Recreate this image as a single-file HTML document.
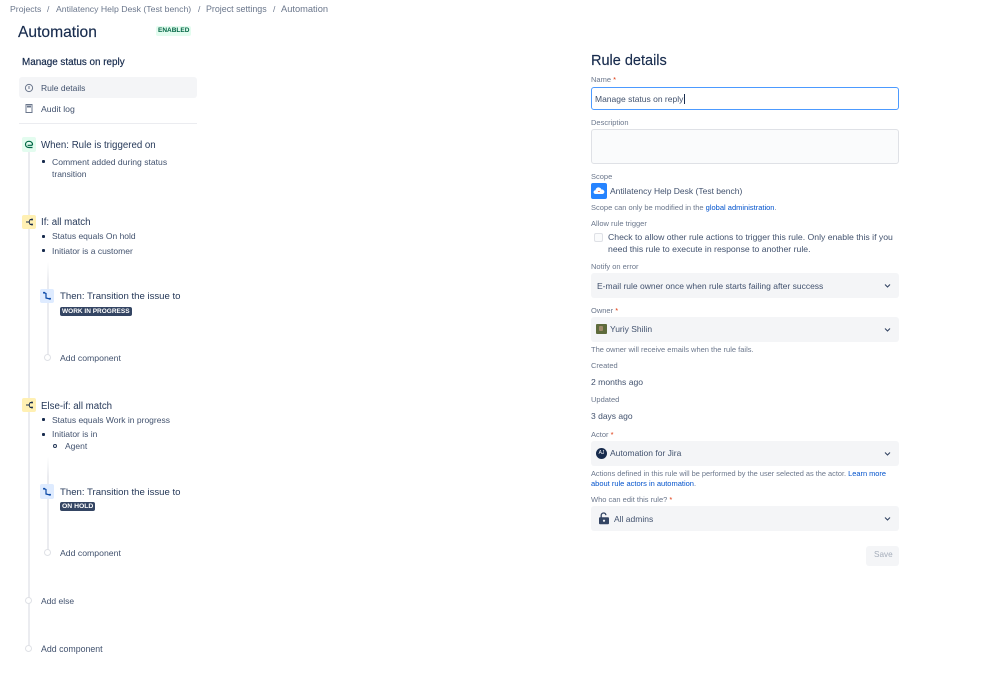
<!DOCTYPE html>
<html><head><meta charset="utf-8"><title>Automation</title>
<style>
html,body{margin:0;padding:0;background:#fff;width:999px;height:682px;overflow:hidden}
body{position:relative;font-family:"Liberation Sans",sans-serif;color:#42526e;font-size:8.5px}
.t{position:absolute;white-space:nowrap;line-height:12px;height:12px}
.b{position:absolute}
.l{color:#6b778c;font-size:7.5px}
.r{color:#de350b}
.c{color:#172b4d}
.h{font-size:9.7px;color:#253858}
.dot{position:absolute;width:3px;height:3px;border-radius:1px;background:#172b4d}
.sel{position:absolute;left:591px;width:308px;height:25px;background:#f4f5f7;border-radius:3px}
.bd{position:absolute;background:#ebecf0;width:2px}
.circ{position:absolute;width:5px;height:5px;border:1px solid #dfe1e6;border-radius:50%;background:#fff}
svg{position:absolute;display:block}
.tag{position:absolute;background:#344563;color:#fff;font-weight:bold;font-size:6.5px;line-height:9px;height:9px;border-radius:2px;padding:0 2px;white-space:nowrap}
a{color:#0052cc;text-decoration:none}
</style></head><body>

<div class="t" style="left:10px;top:3px;color:#6b778c;font-size:8.7px">Projects</div>
<div class="t" style="left:47px;top:3px;color:#6b778c">/</div>
<div class="t" style="left:56px;top:3px;color:#6b778c;font-size:8.7px">Antilatency Help Desk (Test bench)</div>
<div class="t" style="left:198px;top:3px;color:#6b778c">/</div>
<div class="t" style="left:206px;top:3px;color:#6b778c;font-size:8.9px">Project settings</div>
<div class="t" style="left:273px;top:3px;color:#6b778c">/</div>
<div class="t" style="left:281px;top:3px;color:#6b778c;font-size:9.3px">Automation</div>

<div class="t c" style="left:18px;top:23.5px;font-size:15.6px;line-height:18px;height:18px;-webkit-text-stroke:.15px #172b4d">Automation</div>
<div class="b" style="left:156px;top:26px;width:35px;height:10px;background:#e3fcef;border-radius:2px"></div>
<div class="t" style="left:158px;top:24.5px;font-size:6.5px;font-weight:bold;color:#006644">ENABLED</div>

<div class="t c" style="left:22px;top:57px;font-size:9.9px;-webkit-text-stroke:.2px #172b4d">Manage status on reply</div>
<div class="b" style="left:19px;top:77px;width:178px;height:21px;background:#f4f5f7;border-radius:3px"></div>
<svg style="left:24px;top:83px" width="10" height="10" viewBox="0 0 10 10"><circle cx="5" cy="5" r="3.6" fill="none" stroke="#6b778c"/><path d="M5 3v3" stroke="#6b778c"/></svg>
<div class="t" style="left:41px;top:82px">Rule details</div>
<svg style="left:25px;top:104px" width="8" height="9" viewBox="0 0 8 9"><rect x="1" y="0.5" width="6" height="8" fill="none" stroke="#6b778c"/><rect x="2" y="1.5" width="4" height="2" fill="#6b778c"/></svg>
<div class="t" style="left:41px;top:103px;font-size:8.7px">Audit log</div>
<div class="b" style="left:19px;top:123px;width:178px;height:1px;background:#ebecf0"></div>

<div class="bd" style="left:28px;top:152px;height:498px"></div>
<div class="bd" style="left:47px;top:262px;height:96px;background:linear-gradient(#fff,#ebecf0 20px)"></div>
<div class="bd" style="left:47px;top:457px;height:96px;background:linear-gradient(#fff,#ebecf0 20px)"></div>

<div class="b" style="left:22px;top:137px;width:14px;height:15px;background:#e3fcef;border-radius:2px"></div>
<svg style="left:24px;top:140px" width="10" height="9" viewBox="0 0 10 9"><path d="M8.5 7.5 H5 C3 7.5 1.5 6.2 1.5 4.4 C1.5 2.6 3 1.3 5 1.3 C7 1.3 8.5 2.6 8.5 4.2 C8.5 5 8 5.3 7 5.3 H3.6" fill="none" stroke="#006644" stroke-width="1.2"/></svg>
<div class="t h" style="left:41px;top:139.5px">When: Rule is triggered on</div>
<div class="dot" style="left:42px;top:160px"></div>
<div class="t" style="left:52px;top:156px;font-size:8.6px">Comment added during status</div>
<div class="t" style="left:52px;top:168px">transition</div>

<div class="b" style="left:22px;top:215px;width:14px;height:14px;background:#fff0b3;border-radius:2px"></div>
<svg style="left:25px;top:217px" width="9" height="10" viewBox="0 0 9 10"><path d="M1 5H4M7 2.5H5.2L4 5l1.2 2.5H7" fill="none" stroke="#172b4d" stroke-width="1"/><circle cx="7" cy="2.5" r="1" fill="#172b4d"/><circle cx="7" cy="7.5" r="1" fill="#172b4d"/></svg>
<div class="t h" style="left:41px;top:216.5px">If: all match</div>
<div class="dot" style="left:42px;top:235px"></div>
<div class="t" style="left:52px;top:230px">Status equals On hold</div>
<div class="dot" style="left:42px;top:249px"></div>
<div class="t" style="left:52px;top:245px">Initiator is a customer</div>

<div class="b" style="left:40px;top:289px;width:14px;height:14px;background:#deebff;border-radius:2px"></div>
<svg style="left:42px;top:291px" width="10" height="10" viewBox="0 0 10 10"><path d="M2 1.5L4 2.5V7L8 8" fill="none" stroke="#0747a6" stroke-width="1.2"/><circle cx="2" cy="1.8" r="1" fill="#0747a6"/><circle cx="8" cy="7.8" r="1" fill="#0747a6"/></svg>
<div class="t h" style="left:60px;top:291px;font-size:9.6px">Then: Transition the issue to</div>
<div class="tag" style="left:60px;top:307px">WORK IN PROGRESS</div>
<div class="circ" style="left:44px;top:354px"></div>
<div class="t" style="left:60px;top:352px;font-size:8.7px">Add component</div>

<div class="b" style="left:22px;top:398px;width:14px;height:14px;background:#fff0b3;border-radius:2px"></div>
<svg style="left:25px;top:400px" width="9" height="10" viewBox="0 0 9 10"><path d="M1 5H4M7 2.5H5.2L4 5l1.2 2.5H7" fill="none" stroke="#172b4d" stroke-width="1"/><circle cx="7" cy="2.5" r="1" fill="#172b4d"/><circle cx="7" cy="7.5" r="1" fill="#172b4d"/></svg>
<div class="t h" style="left:41px;top:400.5px">Else-if: all match</div>
<div class="dot" style="left:42px;top:418px"></div>
<div class="t" style="left:52px;top:414px">Status equals Work in progress</div>
<div class="dot" style="left:42px;top:433px"></div>
<div class="t" style="left:52px;top:428px">Initiator is in</div>
<div class="b" style="left:53px;top:444px;width:2px;height:2px;border:1px solid #253858;border-radius:50%"></div>
<div class="t" style="left:65px;top:440px">Agent</div>

<div class="b" style="left:40px;top:484px;width:14px;height:15px;background:#deebff;border-radius:2px"></div>
<svg style="left:42px;top:487px" width="10" height="10" viewBox="0 0 10 10"><path d="M2 1.5L4 2.5V7L8 8" fill="none" stroke="#0747a6" stroke-width="1.2"/><circle cx="2" cy="1.8" r="1" fill="#0747a6"/><circle cx="8" cy="7.8" r="1" fill="#0747a6"/></svg>
<div class="t h" style="left:60px;top:486.5px;font-size:9.6px">Then: Transition the issue to</div>
<div class="tag" style="left:60px;top:502px;font-size:6.8px">ON HOLD</div>
<div class="circ" style="left:44px;top:549px"></div>
<div class="t" style="left:60px;top:547px;font-size:8.7px">Add component</div>

<div class="circ" style="left:25px;top:597px"></div>
<div class="t" style="left:41px;top:595px">Add else</div>
<div class="circ" style="left:25px;top:645px"></div>
<div class="t" style="left:41px;top:643px;font-size:8.8px">Add component</div>

<div class="t c" style="left:591px;top:53px;font-size:14.5px;line-height:16px;height:16px;-webkit-text-stroke:.15px #172b4d">Rule details</div>
<div class="t l" style="left:591px;top:73.5px">Name <span class="r">*</span></div>
<div class="b" style="left:591px;top:87px;width:306px;height:21px;border:1px solid #4c9aff;border-radius:3px;background:#fff"></div>
<div class="t" style="left:595px;top:93px">Manage status on reply</div>
<div class="b" style="left:684px;top:94px;width:1px;height:10px;background:#172b4d"></div>

<div class="t l" style="left:591px;top:116.5px">Description</div>
<div class="b" style="left:591px;top:129px;width:306px;height:33px;border:1px solid #dfe1e6;border-radius:3px;background:#fafbfc"></div>

<div class="t l" style="left:591px;top:170.5px">Scope</div>
<div class="b" style="left:591px;top:183px;width:16px;height:16px;background:#2684ff;border-radius:2px"></div>
<svg style="left:593px;top:185px" width="12" height="11" viewBox="0 0 12 11"><path d="M2.5 9C1 9 .4 7.8.6 6.8.8 5.8 1.6 5.2 2.5 5.3 2.7 3.5 4 2.3 5.6 2.4 7 2.5 8 3.3 8.4 4.5 10 4.3 11.4 5.4 11.4 6.9 11.4 8.2 10.4 9 9.3 9Z" fill="#fff"/><path d="M5 6.2c.5.6 1.3.6 1.8 0" stroke="#de350b" stroke-width=".6" fill="none"/></svg>
<div class="t" style="left:610px;top:185px">Antilatency Help Desk (Test bench)</div>
<div class="t l" style="left:591px;top:202px">Scope can only be modified in the <a>global administration</a>.</div>

<div class="t l" style="left:591px;top:218px">Allow rule trigger</div>
<div class="b" style="left:594px;top:233px;width:7px;height:7px;border:1px solid #dfe1e6;border-radius:2px;background:#fafbfc"></div>
<div class="t" style="left:608px;top:231px;font-size:8.68px">Check to allow other rule actions to trigger this rule. Only enable this if you</div>
<div class="t" style="left:608px;top:243px;font-size:8.68px">need this rule to execute in response to another rule.</div>

<div class="t l" style="left:591px;top:261px">Notify on error</div>
<div class="sel" style="top:273px"></div>
<div class="t" style="left:597px;top:280px">E-mail rule owner once when rule starts failing after success</div>
<svg style="left:883px;top:283px" width="9" height="6" viewBox="0 0 9 6"><path d="M2 1.5L4.5 4 7 1.5" fill="none" stroke="#344563" stroke-width="1.1"/></svg>

<div class="t l" style="left:591px;top:305px">Owner <span class="r">*</span></div>
<div class="sel" style="top:317px"></div>
<div class="b" style="left:596px;top:324px;width:11px;height:10px;background:#5e6b3c;border-radius:1px"></div>
<div class="b" style="left:599px;top:326px;width:4px;height:5px;background:#a08a6a;border-radius:1px"></div>
<div class="t" style="left:610px;top:323px">Yuriy Shilin</div>
<svg style="left:883px;top:327px" width="9" height="6" viewBox="0 0 9 6"><path d="M2 1.5L4.5 4 7 1.5" fill="none" stroke="#344563" stroke-width="1.1"/></svg>
<div class="t l" style="left:591px;top:343.5px">The owner will receive emails when the rule fails.</div>

<div class="t l" style="left:591px;top:360px">Created</div>
<div class="t" style="left:591px;top:376px;font-size:8.6px">2 months ago</div>
<div class="t l" style="left:591px;top:394px">Updated</div>
<div class="t" style="left:591px;top:410px">3 days ago</div>

<div class="t l" style="left:591px;top:429px">Actor <span class="r">*</span></div>
<div class="sel" style="top:441px"></div>
<div class="b" style="left:596px;top:448px;width:11px;height:11px;background:#172b4d;border-radius:50%;color:#fff;font-size:5px;line-height:11px;text-align:center">AJ</div>
<div class="t" style="left:610px;top:447px">Automation for Jira</div>
<svg style="left:883px;top:451px" width="9" height="6" viewBox="0 0 9 6"><path d="M2 1.5L4.5 4 7 1.5" fill="none" stroke="#344563" stroke-width="1.1"/></svg>
<div class="t l" style="left:591px;top:468px;font-size:7.4px">Actions defined in this rule will be performed by the user selected as the actor. <a>Learn more</a></div>
<div class="t l" style="left:591px;top:478px"><a>about rule actors in automation</a>.</div>

<div class="t l" style="left:591px;top:494px">Who can edit this rule? <span class="r">*</span></div>
<div class="sel" style="top:506px"></div>
<svg style="left:598px;top:512px" width="12" height="13" viewBox="0 0 12 13"><path d="M3.2 6V3.4C3.2 2 4.2 1 5.5 1 6.8 1 7.8 1.9 7.9 3.2" fill="none" stroke="#344563" stroke-width="1.3"/><rect x="1" y="5.2" width="10" height="7" rx="1" fill="#344563"/><circle cx="6" cy="8.7" r="1.1" fill="#f4f5f7"/></svg>
<div class="t" style="left:614px;top:513px">All admins</div>
<svg style="left:883px;top:516px" width="9" height="6" viewBox="0 0 9 6"><path d="M2 1.5L4.5 4 7 1.5" fill="none" stroke="#344563" stroke-width="1.1"/></svg>

<div class="b" style="left:866px;top:546px;width:33px;height:20px;background:#f4f5f7;border-radius:3px"></div>
<div class="t" style="left:874px;top:549px;color:#a5adba;font-size:8.2px">Save</div>
</body></html>
